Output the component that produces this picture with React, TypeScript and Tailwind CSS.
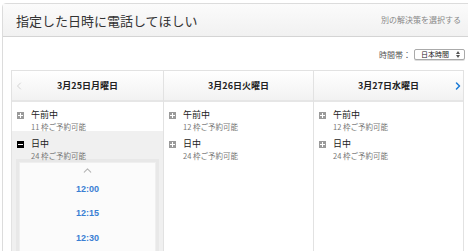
import { ChevronLeft, ChevronRight, ChevronUp } from 'lucide-react';

const font = '"Noto Sans CJK JP", "Liberation Sans", sans-serif';

interface Slot {
  label: string;
  count: number;
}

const days: { date: string; slots: Slot[] }[] = [
  { date: '3月25日月曜日', slots: [{ label: '午前中', count: 11 }, { label: '日中', count: 24 }] },
  { date: '3月26日火曜日', slots: [{ label: '午前中', count: 12 }, { label: '日中', count: 24 }] },
  { date: '3月27日水曜日', slots: [{ label: '午前中', count: 12 }, { label: '日中', count: 24 }] },
];

function Toggle({ open }: { open: boolean }) {
  return (
    <span
      className={`relative mt-[3px] inline-block w-[7px] h-[7px] shrink-0 ${open ? 'bg-black' : 'bg-[#9a9a9a]'}`}
    >
      <span className="absolute left-[1px] top-[3px] w-[5px] h-[1px] bg-white" />
      {!open && <span className="absolute left-[3px] top-[1px] w-[1px] h-[5px] bg-white" />}
    </span>
  );
}

function SlotRow({ slot, open }: { slot: Slot; open: boolean }) {
  return (
    <div className="flex gap-[7px] pl-[5px] pt-[7px] h-[29px]">
      <Toggle open={open} />
      <div>
        <div className="text-[9px] leading-[12px] text-[#222]">{slot.label}</div>
        <div className="text-[7.5px] leading-[11px] text-[#777]">{slot.count} 枠ご予約可能</div>
      </div>
    </div>
  );
}

export default function App() {
  return (
    <div className="w-[468px] h-[251px] overflow-hidden bg-white pt-[3px] pl-[2px]" style={{ fontFamily: font }}>
      <div className="w-[480px] h-[260px] border border-[#dcdcdc] rounded-tl-[4px] bg-white">
        <div className="h-[33px] flex items-center justify-between pl-[13px] pr-[20px] bg-gradient-to-b from-[#fbfbfb] to-[#f1f1f1] border-b border-[#d4d4d4]">
          <h1 className="text-[13px] text-[#333] leading-none">指定した日時に電話してほしい</h1>
          <a className="text-[8px] text-[#888]">別の解決策を選択する</a>
        </div>

        <div className="pl-[8px] pr-[17px]">
          <div className="flex justify-end items-center h-[33px] pt-[2px] gap-[3px]">
            <span className="text-[8px] text-[#555]">時間帯：</span>
            <span className="flex items-center gap-[7px] h-[11px] pl-[6px] pr-[4px] mr-[-1px] border border-[#aaa] rounded-[2px] text-[7px] leading-none text-[#222] bg-white shadow-[0_1px_0_#ddd]">
              日本時間
              <svg width="4" height="7" viewBox="0 0 4 7" className="text-[#555]">
                <path d="M0 3 L2 0 L4 3 Z M0 4 L2 7 L4 4 Z" fill="currentColor" />
              </svg>
            </span>
          </div>

          <div className="grid grid-cols-[152px_150px_149px] border border-[#e2e2e2] h-[200px]">
            {days.map((d, i) => (
              <div key={d.date} className={`flex flex-col ${i < 2 ? 'border-r border-[#e2e2e2]' : ''}`}>
                <div className="relative h-[31px] flex items-center justify-center bg-gradient-to-b from-white to-[#f2f2f2] border-b-2 border-[#e6e6e6]">
                  <span className="text-[9px] font-bold text-[#222]">{d.date}</span>
                  {i === 0 && (
                    <ChevronLeft size={12} strokeWidth={1.5} className="absolute left-[1px] top-[9px] text-[#c6c6c6]" />
                  )}
                  {i === 2 && (
                    <ChevronRight size={12} strokeWidth={3} className="absolute right-[-1px] top-[9px] text-[#1a7ad6]" />
                  )}
                </div>
                <div className="flex-1">
                  <SlotRow slot={d.slots[0]} open={false} />
                  {i === 0 ? (
                    <div className="bg-[#f0f0f0] h-[140px]">
                      <SlotRow slot={d.slots[1]} open />
                      <div className="mx-[4px] -mt-[1px] h-[120px] bg-[#fbfbfb] border-[3px] border-b-0 border-[#e8e8e8] shadow-[inset_0_0_0_1px_#efefef] flex flex-col items-center">
                        <ChevronUp size={13} strokeWidth={2} className="mt-[2px] text-[#b5b5b5]" />
                        {['12:00', '12:15', '12:30'].map(t => (
                          <div key={t} className="h-[24.5px] flex items-center text-[9px] font-bold text-[#3a7fd3] first:mt-[2px]" style={{ fontFamily: '"Liberation Sans", sans-serif' }}>
                            {t}
                          </div>
                        ))}
                      </div>
                    </div>
                  ) : (
                    <SlotRow slot={d.slots[1]} open={false} />
                  )}
                </div>
              </div>
            ))}
          </div>
        </div>
      </div>
    </div>
  );
}
